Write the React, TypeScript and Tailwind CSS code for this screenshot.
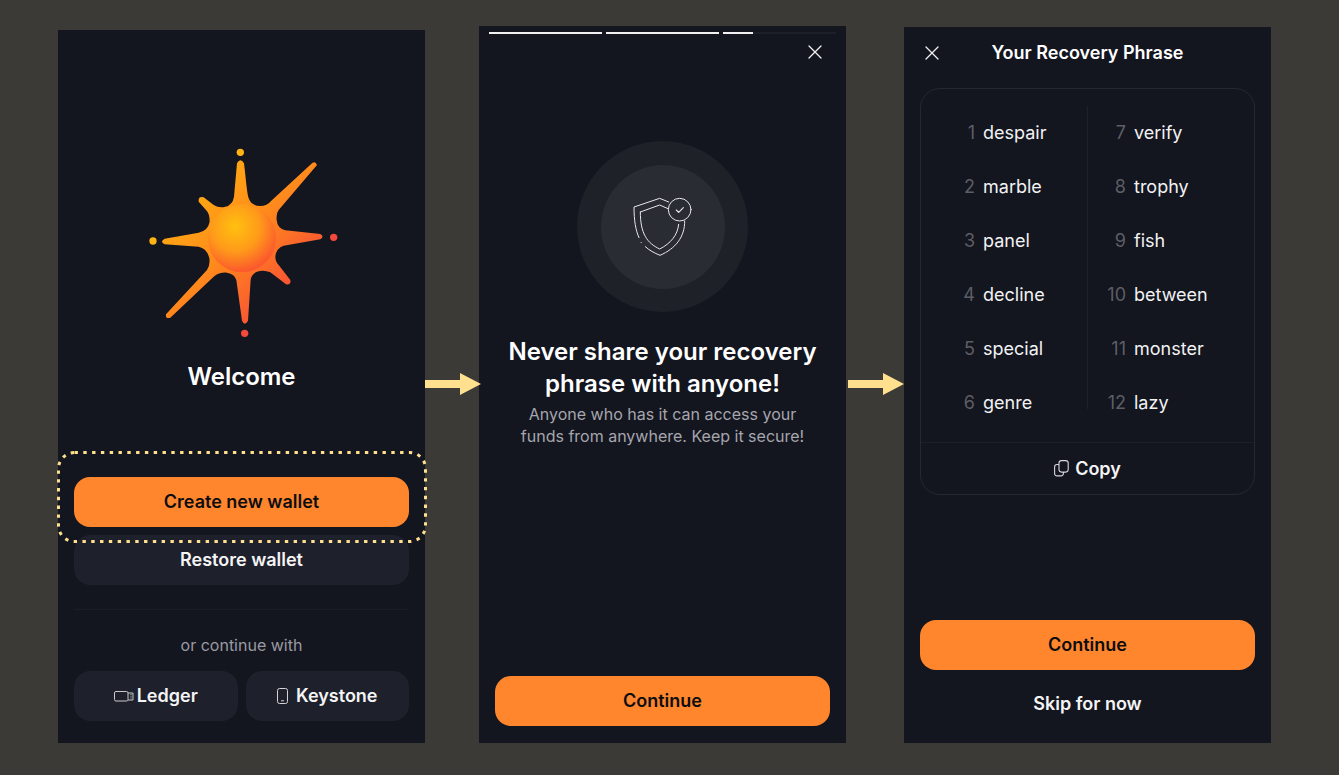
const words = [
  ['despair', 'verify'],
  ['marble', 'trophy'],
  ['panel', 'fish'],
  ['decline', 'between'],
  ['special', 'monster'],
  ['genre', 'lazy'],
]

function CloseIcon() {
  return (
    <svg width="16" height="16" viewBox="0 0 16 16" fill="none" stroke="#f1f1f1" strokeWidth="1.3" strokeLinecap="round">
      <path d="M2 2l12 12M14 2L2 14" />
    </svg>
  )
}

function Star() {
  return (
    <svg width="220" height="220" viewBox="0 0 660 660">
      <defs>
        <linearGradient id="starFill" x1="120" y1="130" x2="520" y2="530" gradientUnits="userSpaceOnUse">
          <stop offset="0" stopColor="#ffb60f" />
          <stop offset="0.5" stopColor="#ff8a1c" />
          <stop offset="1" stopColor="#f63f3c" />
        </linearGradient>
        <radialGradient id="coreFill" cx="310" cy="290" r="135" gradientUnits="userSpaceOnUse">
          <stop offset="0" stopColor="#ffc00f" />
          <stop offset="0.55" stopColor="#ff9a1a" />
          <stop offset="1" stopColor="#fb5a2c" />
        </radialGradient>
      </defs>
      <path
        fill="url(#starFill)"
        d="M315 100Q325 82 336 100C342 150 345 190 350 205Q358 228 385 228Q405 228 418 212L540 100Q550 92 555 105L440 240Q432 250 434 270Q436 295 460 301L565 312Q578 320 565 328L455 347Q432 355 430 380Q430 395 440 405L475 450Q478 465 462 463L415 427Q395 418 375 425Q358 432 356 450L348 572Q338 590 330 572L313 450Q308 432 285 428Q262 426 245 440L115 563Q100 568 102 553L225 420Q235 405 232 385Q225 355 200 350L98 343Q82 335 98 326L200 308Q228 302 233 275Q233 250 222 240L200 215Q198 198 215 202L245 225Q262 235 280 230Q302 225 306 200Z"
      />
      <circle cx="330" cy="325" r="102" fill="url(#coreFill)" />
      <circle cx="325" cy="67" r="11" fill="#ffb414" />
      <circle cx="63" cy="333" r="11" fill="#ffb414" />
      <circle cx="605" cy="322" r="11" fill="#f4483a" />
      <circle cx="338" cy="610" r="11" fill="#f4483a" />
    </svg>
  )
}

function ShieldIcon() {
  return (
    <svg width="60" height="60" viewBox="198 200 180 180" fill="none" stroke="#e8e8ea" strokeWidth="3" strokeLinecap="round" strokeLinejoin="round">
      <path d="M216 322C206 300 201 270 201 230L278 204L305 215" />
      <path d="M353 272C354 320 325 355 279 375C262 368 247 360 235 349" />
      <path d="M222 336L223 337" />
      <path d="M220 245L278 224L303 235M335 282C332 315 310 340 278 356C240 338 220 310 220 245" />
      <circle cx="338" cy="238" r="34" />
      <path d="M328 239L335 246L349 232" strokeWidth="3.5" />
    </svg>
  )
}

function LedgerIcon() {
  return (
    <svg width="20" height="11" viewBox="0 0 20 11" fill="none" stroke="#c9c9cc" strokeWidth="1">
      <rect x="0.5" y="0.5" width="13.5" height="9.5" rx="1.5" />
      <path d="M14 2h5v7h-5" />
      <path d="M16.5 3.5h1M16.5 5.2h1M16.5 7h1" />
    </svg>
  )
}

function KeystoneIcon() {
  return (
    <svg width="11" height="16" viewBox="0 0 11 16" fill="none" stroke="#d4d4d6" strokeWidth="1">
      <rect x="0.5" y="0.5" width="10" height="15" rx="2" />
      <path d="M4 12.8h3" />
    </svg>
  )
}

function CopyIcon() {
  return (
    <svg width="15" height="17" viewBox="0 0 15 17" fill="none" stroke="#d8d8da" strokeWidth="1.1">
      <rect x="5" y="0.6" width="9.2" height="11.5" rx="2.5" />
      <path d="M5 4.5H3A2.4 2.4 0 0 0 .6 6.9v6.6A2.4 2.4 0 0 0 3 15.9h4a2.4 2.4 0 0 0 2.4-2.4v-1.4" />
    </svg>
  )
}

function Arrow() {
  return (
    <svg width="56" height="22" viewBox="0 0 56 22" fill="#ffe08f">
      <path d="M0 7h35V0l21 11-21 11v-7H0z" />
    </svg>
  )
}

function PrimaryButton({ label }: { label: string }) {
  return (
    <button className="h-[50px] w-full rounded-2xl bg-[#ff862d] text-lg font-semibold text-[#0d0d0f]">
      {label}
    </button>
  )
}

function SecondaryButton({ children }: { children: React.ReactNode }) {
  return (
    <button className="flex h-[50px] w-full items-center justify-center rounded-2xl bg-[#1e202b] text-lg font-semibold text-[#f4f4f5]">
      {children}
    </button>
  )
}

function WelcomeScreen() {
  return (
    <div className="relative flex h-[713px] w-[367px] flex-col items-center bg-[#13151f] px-4">
      <div className="mt-[100px]">
        <Star />
      </div>
      <h1 className="mt-[11px] text-2xl font-semibold leading-8 text-white">Welcome</h1>
      <div className="mt-[84px] w-full">
        <PrimaryButton label="Create new wallet" />
      </div>
      <div className="mt-2 w-full">
        <SecondaryButton>Restore wallet</SecondaryButton>
      </div>
      <div className="mt-6 h-px w-full bg-[#1b1d27]" />
      <p className="mt-[25px] text-base leading-5 text-[#9a9aa2]">or continue with</p>
      <div className="mt-4 flex w-full gap-2">
        <SecondaryButton>
          <LedgerIcon />
          <span className="ml-[3px]">Ledger</span>
        </SecondaryButton>
        <SecondaryButton>
          <KeystoneIcon />
          <span className="ml-[8px]">Keystone</span>
        </SecondaryButton>
      </div>
      <svg className="absolute left-[-1px] top-[421px]" width="370" height="92" fill="none">
        <rect x="1.5" y="1.5" width="367" height="89" rx="16" stroke="#ffe08f" strokeWidth="3" strokeDasharray="3.4 5.4" />
      </svg>
    </div>
  )
}

function WarningScreen() {
  return (
    <div className="flex h-[717px] w-[367px] flex-col items-center bg-[#13151f] px-4 pb-[17px]">
      <div className="mt-[6px] flex w-[347px] gap-1">
        <div className="h-[2px] flex-1 bg-[#f1f1f3]" />
        <div className="h-[2px] flex-1 bg-[#f1f1f3]" />
        <div className="h-[2px] flex-1 bg-[#1d1f28]">
          <div className="h-full w-[30px] bg-[#f1f1f3]" />
        </div>
      </div>
      <div className="mt-[10px] flex w-full justify-end pr-[7px]">
        <CloseIcon />
      </div>
      <div className="mt-[81px] flex h-[171px] w-[171px] items-center justify-center rounded-full bg-[#1f2128]">
        <div className="flex h-[124px] w-[124px] items-center justify-center rounded-full bg-[#2a2c33]">
          <ShieldIcon />
        </div>
      </div>
      <h2 className="mt-6 text-center text-2xl font-semibold leading-8 text-white">
        Never share your recovery
        <br />
        phrase with anyone!
      </h2>
      <p className="mt-[3px] text-center text-base leading-[22px] text-[#a6a6ad]">
        Anyone who has it can access your
        <br />
        funds from anywhere. Keep it secure!
      </p>
      <div className="mt-auto w-full">
        <PrimaryButton label="Continue" />
      </div>
    </div>
  )
}

function WordCell({ index, word, wide }: { index: number; word: string; wide?: boolean }) {
  return (
    <div className={`flex h-[54px] items-center ${wide ? 'pl-[14px]' : 'pl-[30px]'}`}>
      <span className="w-[24px] text-right text-lg text-[#5d5e65]">{index}</span>
      <span className="ml-2 text-lg text-[#f2f2f3]">{word}</span>
    </div>
  )
}

function PhraseScreen() {
  return (
    <div className="flex h-[716px] w-[367px] flex-col bg-[#13151f] px-4">
      <div className="relative mt-[17px] flex h-[18px] items-center justify-center">
        <div className="absolute left-[4px]">
          <CloseIcon />
        </div>
        <h2 className="text-lg font-semibold text-white">Your Recovery Phrase</h2>
      </div>
      <div className="mt-[26px] h-[407px] rounded-[20px] border border-[#262831]">
        <div className="flex h-[354px] border-b border-[#1d1f28] pt-[17px]">
          <div className="h-[303px] w-[167px] border-r border-[#1f2129] pt-0">
            <div className="-mt-[-0px]">
              {words.map((row, i) => (
                <WordCell key={row[0]} index={i + 1} word={row[0]} />
              ))}
            </div>
          </div>
          <div className="flex-1">
            {words.map((row, i) => (
              <WordCell key={row[1]} index={i + 7} word={row[1]} wide />
            ))}
          </div>
        </div>
        <div className="flex h-[51px] items-center justify-center gap-[6px] text-lg font-semibold text-[#f4f4f5]">
          <CopyIcon />
          <span>Copy</span>
        </div>
      </div>
      <div className="mt-auto">
        <PrimaryButton label="Continue" />
      </div>
      <button className="mb-[29px] mt-6 h-[20px] text-lg font-semibold leading-5 text-[#f4f4f5]">Skip for now</button>
    </div>
  )
}

export default function App() {
  return (
    <div className="flex h-[775px] w-[1339px] items-end bg-[#3b3a37] pb-[32px] pl-[58px] font-[Inter,sans-serif]">
      <WelcomeScreen />
      <div className="relative z-10 mb-[348px] w-[54px]">
        <Arrow />
      </div>
      <WarningScreen />
      <div className="relative z-10 mb-[348px] ml-[2px] w-[56px]">
        <Arrow />
      </div>
      <PhraseScreen />
    </div>
  )
}
